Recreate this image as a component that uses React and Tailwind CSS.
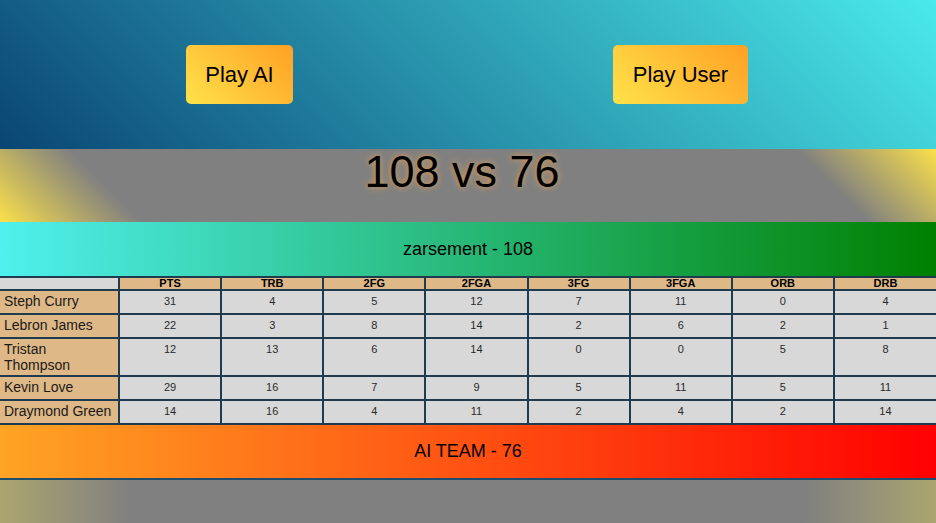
const players = [
  { name: "Steph Curry", stats: [31, 4, 5, 12, 7, 11, 0, 4] },
  { name: "Lebron James", stats: [22, 3, 8, 14, 2, 6, 2, 1] },
  { name: "Tristan Thompson", stats: [12, 13, 6, 14, 0, 0, 5, 8] },
  { name: "Kevin Love", stats: [29, 16, 7, 9, 5, 11, 5, 11] },
  { name: "Draymond Green", stats: [14, 16, 4, 11, 2, 4, 2, 14] },
];

const columns = ["PTS", "TRB", "2FG", "2FGA", "3FG", "3FGA", "ORB", "DRB"];

function PlayButton({ label, width }) {
  return (
    <button
      className={`h-[59px] ${width} rounded-[5px] bg-[linear-gradient(45deg,#ffe24a,#ffa024)] text-[22px] text-black`}
    >
      {label}
    </button>
  );
}

export default function App() {
  return (
    <div className="flex min-h-[523px] flex-col font-['Liberation_Sans',Arial,sans-serif] text-black">
      <header className="flex h-[149px] items-center justify-between bg-[linear-gradient(45deg,#0a4574,#4aeaea)] pl-[186px] pr-[188px]">
        <PlayButton label="Play AI" width="w-[107px]" />
        <PlayButton label="Play User" width="w-[135px]" />
      </header>

      <div className="h-[73px] bg-[linear-gradient(45deg,#fbe04a_0%,#808080_14%,#808080_86%,#fbe04a_100%)] pr-[12px] text-center">
        <h1 className="text-[45px] leading-none [text-shadow:0_0_6px_#e8a050]">108 vs 76</h1>
      </div>

      <div className="flex h-[54px] items-center justify-center bg-[linear-gradient(to_right,#4ff0ee,#008000)] text-[18px]">
        zarsement - 108
      </div>

      <table className="w-full table-fixed border-collapse">
        <colgroup>
          <col className="w-[119px]" />
          {columns.map((c) => (
            <col key={c} />
          ))}
        </colgroup>
        <thead>
          <tr className="h-[13px]">
            <th className="border-2 border-l-0 border-[#1f3b4f] bg-[#d8d8d8]" />
            {columns.map((c, i) => (
              <th
                key={c}
                className={`border-2 border-[#1f3b4f] bg-[#deb887] p-0 text-[11px] leading-[11px] font-bold ${
                  i === columns.length - 1 ? "border-r-0" : ""
                }`}
              >
                {c}
              </th>
            ))}
          </tr>
        </thead>
        <tbody>
          {players.map((p) => (
            <tr key={p.name} className="h-[24px]">
              <td className="border-2 border-l-0 border-[#1f3b4f] bg-[#deb887] py-[2px] pl-[4px] pr-[4px] align-top text-left text-[14px] leading-[16px] text-[#1a1a1a]">
                {p.name}
              </td>
              {p.stats.map((s, i) => (
                <td
                  key={i}
                  className={`border-2 border-[#1f3b4f] bg-[#d8d8d8] py-[2px] text-center align-top text-[11px] leading-[16px] text-[#2a2a2a] ${
                    i === p.stats.length - 1 ? "border-r-0" : ""
                  }`}
                >
                  {s}
                </td>
              ))}
            </tr>
          ))}
        </tbody>
      </table>

      <div className="flex h-[55px] items-center justify-center border-b-2 border-[#1d4e70] bg-[linear-gradient(to_right,#ffa424,#ff0000)] text-[18px]">
        AI TEAM - 76
      </div>

      <div className="flex-1 bg-[linear-gradient(to_right,#aba56f_0%,#808080_14%,#808080_86%,#aba56f_100%)]" />
    </div>
  );
}
